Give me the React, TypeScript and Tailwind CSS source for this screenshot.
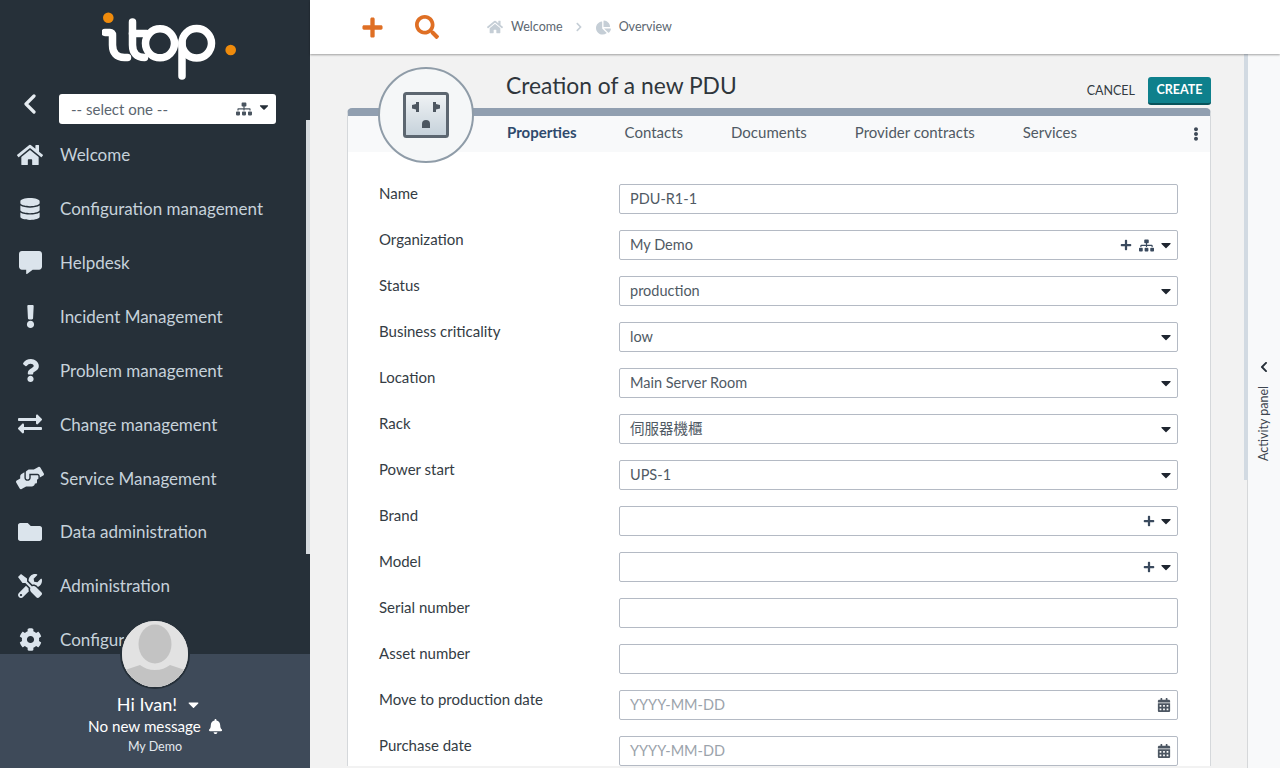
import React from 'react';
import {
  FaHome, FaDatabase, FaCommentAlt, FaExclamation, FaQuestion, FaExchangeAlt, FaHandsHelping,
  FaFolder, FaTools, FaCog, FaSitemap, FaPlus, FaSearch, FaCalendarAlt, FaBell,
  FaChevronLeft, FaChevronRight, FaChartPie, FaEllipsisV, FaCaretDown,
} from 'react-icons/fa';

const menu = [
  { label: 'Welcome', icon: FaHome, size: 26 },
  { label: 'Configuration management', icon: FaDatabase, size: 22 },
  { label: 'Helpdesk', icon: FaCommentAlt, size: 23 },
  { label: 'Incident Management', icon: FaExclamation, size: 23 },
  { label: 'Problem management', icon: FaQuestion, size: 23 },
  { label: 'Change management', icon: FaExchangeAlt, size: 24 },
  { label: 'Service Management', icon: FaHandsHelping, size: 28 },
  { label: 'Data administration', icon: FaFolder, size: 24 },
  { label: 'Administration', icon: FaTools, size: 24 },
  { label: 'Configuration', icon: FaCog, size: 23 },
];

type Field = {
  label: string;
  value?: string;
  placeholder?: string;
  plus?: boolean;
  tree?: boolean;
  caret?: boolean;
  calendar?: boolean;
};

const fields: Field[] = [
  { label: 'Name', value: 'PDU-R1-1' },
  { label: 'Organization', value: 'My Demo', plus: true, tree: true, caret: true },
  { label: 'Status', value: 'production', caret: true },
  { label: 'Business criticality', value: 'low', caret: true },
  { label: 'Location', value: 'Main Server Room', caret: true },
  { label: 'Rack', value: '伺服器機櫃', caret: true },
  { label: 'Power start', value: 'UPS-1', caret: true },
  { label: 'Brand', plus: true, caret: true },
  { label: 'Model', plus: true, caret: true },
  { label: 'Serial number' },
  { label: 'Asset number' },
  { label: 'Move to production date', placeholder: 'YYYY-MM-DD', calendar: true },
  { label: 'Purchase date', placeholder: 'YYYY-MM-DD', calendar: true },
];

const tabs = ['Properties', 'Contacts', 'Documents', 'Provider contracts', 'Services'];

function Logo() {
  return (
    <svg width="140" height="72" viewBox="0 0 140 72" className="block">
      <circle cx="6.300" cy="5.700" r="5.300" fill="#ef8b0c" />
      <g fill="none" stroke="#ffffff" strokeWidth="7.500" strokeLinecap="round">
        <path d="M3 20.500h5c1.500 0 2.500 1 2.500 2.500v10c0 8 4 12.500 12 12.500h3" />
        <path d="M30.500 10v23c0 8 4 12.500 12 12.500" />
        <path d="M30.500 21.500h14" />
        <circle cx="58" cy="31.300" r="14.500" />
        <circle cx="94.700" cy="31.300" r="14.800" />
        <path d="M80 31v33" />
      </g>
      <circle cx="128.700" cy="38" r="5.300" fill="#ef8b0c" />
    </svg>
  );
}

function OutletIcon() {
  return (
    <svg width="46" height="46" viewBox="0 0 46 46">
      <defs>
        <linearGradient id="outletBg" x1="0" y1="0" x2="0" y2="1">
          <stop offset="0" stopColor="#f0f3f5" />
          <stop offset="1" stopColor="#c5d1da" />
        </linearGradient>
      </defs>
      <rect x="1.500" y="1.500" width="43" height="43" rx="2" fill="url(#outletBg)" stroke="#5c6670" strokeWidth="3" />
      <path d="M16 10v10h-3v-2.500l-4-1v-3.500l4-1V10z" fill="#4c5660" />
      <path d="M30 10v10h3v-2.500l4-1v-3.500l-4-1V10z" fill="#4c5660" />
      <path d="M19 36v-4a4 4 0 0 1 8 0v4z" fill="#4c5660" />
    </svg>
  );
}

function App() {
  return (
    <div className="w-[1280px] h-[768px] flex overflow-hidden bg-[#f2f2f2] text-[#3d4650] font-['Lato','Noto_Sans_CJK_TC',sans-serif]">
      <aside className="relative w-[310px] h-full shrink-0 flex flex-col bg-[#263039]">
        <div className="h-[84px] shrink-0 pt-[12px] pl-[102px]">
          <Logo />
        </div>
        <div className="h-[44px] shrink-0 flex items-start pt-[10px]">
          <div className="w-[59px] flex justify-center">
            <svg width="14" height="22" viewBox="0 0 14 22" fill="none" stroke="#e6ecf1" strokeWidth="3.200" strokeLinecap="round" strokeLinejoin="round">
              <polyline points="11,2 3,10 11,18" />
            </svg>
          </div>
          <div className="w-[217px] h-[30px] bg-white rounded-[3px] flex items-center pl-[12px] pr-[5px] text-[15px] text-[#5c6670]">
            <span className="flex-1">-- select one --</span>
            <FaSitemap size={16} className="text-[#4a5560]" />
            <FaCaretDown size={14} className="text-[#262f38] ml-[5px] mt-[-4px]" />
          </div>
        </div>
        <nav className="flex-1 overflow-hidden">
          {menu.map(m => {
            const Icon = m.icon;
            return (
              <div key={m.label} className="h-[53.900px] flex items-center text-[#c6d2db] text-[17px]">
                <div className="w-[60px] flex justify-center">
                  <Icon size={m.size} className="text-[#dbe4ec]" />
                </div>
                <span>{m.label}</span>
              </div>
            );
          })}
        </nav>
        <div className="relative h-[114px] shrink-0 bg-[#3e4a59] flex flex-col items-center text-white pt-[38px]">
          <div className="absolute left-[120px] top-[-35px] w-[70px] h-[70px] rounded-full bg-[#e2e2e2] border-[2px] border-[#263039] overflow-hidden">
            <svg viewBox="0 0 66 66" className="w-full h-full">
              <rect width="66" height="66" fill="#e2e2e2" />
              <ellipse cx="33" cy="23" rx="16.500" ry="19.500" fill="#c3c3c3" />
              <path d="M0 66V50l18-6c4 3 9 5 15 5s11-2 15-5l18 6v16z" fill="#c3c3c3" />
            </svg>
          </div>
          <div className="flex items-center text-[18px] leading-[24px] h-[24px] pl-[9px]">
            <span>Hi Ivan!</span>
            <FaCaretDown size={17} className="ml-[8px]" />
          </div>
          <div className="flex items-center text-[15.200px] leading-[20px] h-[20px] pl-[1px]">
            <span>No new message</span>
            <FaBell size={15} className="ml-[7px]" />
          </div>
          <div className="text-[12.500px] leading-[16px] mt-[3px] text-[#e4e9ee]">My Demo</div>
        </div>
        <div className="absolute right-0 top-[120px] w-[4px] h-[434px] bg-[#d6dbdf]" />
      </aside>

      <div className="flex-1 min-w-0 h-full flex flex-col">
        <header className="relative z-10 h-[54px] shrink-0 bg-white shadow-[0_1px_2px_rgba(0,0,0,0.35)] flex items-center pl-[51px]">
          <FaPlus size={23} className="text-[#df6f24]" />
          <FaSearch size={24} className="text-[#df6f24] ml-[31px]" />
          <FaHome size={16} className="text-[#c5ced6] ml-[48px]" />
          <span className="text-[12.500px] text-[#5b6670] ml-[8px]">Welcome</span>
          <FaChevronRight size={10} className="text-[#c5ced6] ml-[11px]" />
          <FaChartPie size={15} className="text-[#c5ced6] ml-[12px]" />
          <span className="text-[12.500px] text-[#5b6670] ml-[8px]">Overview</span>
        </header>

        <div className="flex-1 min-h-0 flex">
          <main className="flex-1 min-w-0 pl-[37px] pr-[36px] overflow-hidden">
            <div className="relative h-[54px] flex items-start pl-[159px]">
              <h1 className="text-[22.800px] leading-[32px] mt-[15px] text-[#2f363c] font-normal">Creation of a new PDU</h1>
              <div className="ml-auto mt-[23px] flex items-center">
                <span className="text-[12.500px] text-[#333b42] mr-[13px]">CANCEL</span>
                <span className="w-[63px] h-[28px] flex items-center justify-center rounded-[3px] bg-[#0e808c] border-b-[2px] border-[#07525a] text-white text-[12.500px] font-bold">CREATE</span>
              </div>
              <div className="absolute left-[31px] top-[13px] w-[96px] h-[96px] rounded-full z-10 border-[2px] border-[#8f9ca8] bg-[#f5f7f8] flex items-center justify-center">
                <OutletIcon />
              </div>
            </div>
            <section className="rounded-t-[5px] border-x border-[#d5d8db] border-t-[8px] border-t-[#919fb0] bg-white">
              <div className="h-[36px] bg-[#f8f9fa] flex items-center pl-[159px] pr-[7px] text-[15px] pb-[4px]">
                <div className="flex flex-1 gap-[48px]">
                  {tabs.map((t, i) => (
                    <span key={t} className={i === 0 ? 'font-bold text-[#2f4a6d]' : 'text-[#505a64]'}>{t}</span>
                  ))}
                </div>
                <FaEllipsisV size={14} className="text-[#3f4a57] mt-[3px]" />
              </div>
              <div className="pt-[32px] pl-[31px] pr-[32px] flex flex-col gap-[16px]">
                {fields.map(f => (
                  <div key={f.label} className="h-[30px] flex items-start">
                    <label className="w-[240px] shrink-0 text-[15px] leading-[18px] text-[#343c44]">{f.label}</label>
                    <div className="flex-1 h-[30px] border border-[#b4bac4] rounded-[2px] bg-white flex items-center pl-[10px] pr-[3px] text-[14.500px] text-[#505a64]">
                      <span className={f.placeholder ? 'flex-1 text-[#9ba3ab]' : 'flex-1'}>{f.value ?? f.placeholder}</span>
                      {f.plus && <FaPlus size={12} className={f.tree ? 'text-[#3a4a5e] mr-[7px]' : 'text-[#3a4a5e] mr-[3px]'} />}
                      {f.tree && <FaSitemap size={15} className="text-[#3a4a5e] mr-[4px]" />}
                      {f.caret && <FaCaretDown size={16} className="text-[#1f2630]" />}
                      {f.calendar && <FaCalendarAlt size={14} className="text-[#4c5662] mr-[3px]" />}
                    </div>
                  </div>
                ))}
              </div>
            </section>
          </main>

          <aside className="relative w-[33px] shrink-0 bg-[#f8f9fa] border-l border-[#d6d8da] flex flex-col items-center">
            <div className="absolute left-[-4px] top-0 w-[4px] h-[426px] bg-[#d2dae2]" />
            <FaChevronLeft size={12} className="text-[#262f38] mt-[307px]" />
            <span className="[writing-mode:vertical-rl] rotate-180 text-[12.500px] text-[#3d4650] mt-[13px]">Activity panel</span>
          </aside>
        </div>
      </div>
    </div>
  );
}

export default App;
